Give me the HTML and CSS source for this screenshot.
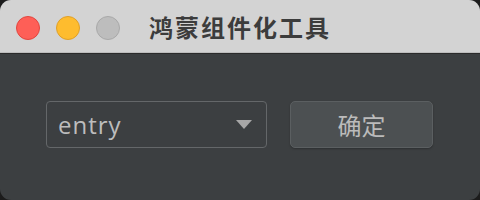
FILE: index.html
```html
<!DOCTYPE html>
<html lang="zh-CN">
<head>
    <meta charset="UTF-8">
    <title>鸿蒙组件化工具</title>
    <link rel="stylesheet" href="styles.css">
</head>
<body>

<div class="window">
    <div class="titlebar">
        <div class="lights">
            <span class="light close"></span>
            <span class="light min"></span>
            <span class="light max"></span>
        </div>
        <div class="title">鸿蒙组件化工具</div>
    </div>

    <div class="content">
        <div class="combo">
            <span class="combo-text">entry</span>
            <span class="arrow"></span>
        </div>
        <button class="ok">确定</button>
    </div>
</div>

</body>
</html>
```

FILE: styles.css
```css
* {
    margin: 0;
    padding: 0;
    box-sizing: border-box;
}

body {
    width: 480px;
    height: 200px;
    background-color: #1c1c1c;
    font-family: "Noto Sans CJK SC", "Noto Sans", sans-serif;
    overflow: hidden;
}

.window {
    width: 480px;
    height: 200px;
    border-radius: 11px;
    overflow: hidden;
    background-color: #3c3f41;
    display: flex;
    flex-direction: column;
}

.titlebar {
    height: 53px;
    background-color: #d3d3d3;
    border-bottom: 1px solid #bdbdbd;
    box-shadow: 0 1px 0 #2b2b2b;
    display: flex;
    align-items: center;
    position: relative;
    flex-shrink: 0;
}

.lights {
    display: flex;
    gap: 16px;
    padding-left: 16px;
    margin-top: 3px;
}

.light {
    width: 24px;
    height: 24px;
    border-radius: 50%;
}

.light.close {
    background-color: #fe5f57;
    border: 1px solid #e2463f;
}

.light.min {
    background-color: #febc2e;
    border: 1px solid #e0a028;
}

.light.max {
    background-color: #bdbdbd;
    border: 1px solid #a9a9a9;
}

.title {
    position: absolute;
    left: 0;
    right: 0;
    top: 0;
    bottom: 0;
    display: flex;
    align-items: center;
    justify-content: center;
    padding-top: 1px;
    font-size: 24px;
    font-weight: bold;
    color: #3c3c3c;
    letter-spacing: 2px;
    pointer-events: none;
}

.content {
    flex: 1;
    display: flex;
    align-items: flex-start;
    gap: 23px;
    padding: 48px 0 0 46px;
}

.combo {
    width: 221px;
    height: 47px;
    border: 1px solid #646769;
    border-radius: 4px;
    display: flex;
    align-items: center;
    justify-content: space-between;
    padding: 0 14px 0 11px;
}

.combo-text {
    font-family: "Open Sans", "Noto Sans", sans-serif;
    font-size: 24px;
    letter-spacing: 1px;
    color: #bdbdbd;
    margin-top: -1px;
}

.arrow {
    width: 0;
    height: 0;
    border-left: 8px solid transparent;
    border-right: 8px solid transparent;
    border-top: 9px solid #a7a7a7;
}

.ok {
    width: 143px;
    height: 47px;
    border: 1px solid #5b5f61;
    border-radius: 5px;
    background-color: #4c5052;
    color: #bbbbbb;
    font-family: "Noto Sans CJK SC", sans-serif;
    font-size: 24px;
    box-shadow: 0 1px 2px rgba(0, 0, 0, 0.25);
}
```
